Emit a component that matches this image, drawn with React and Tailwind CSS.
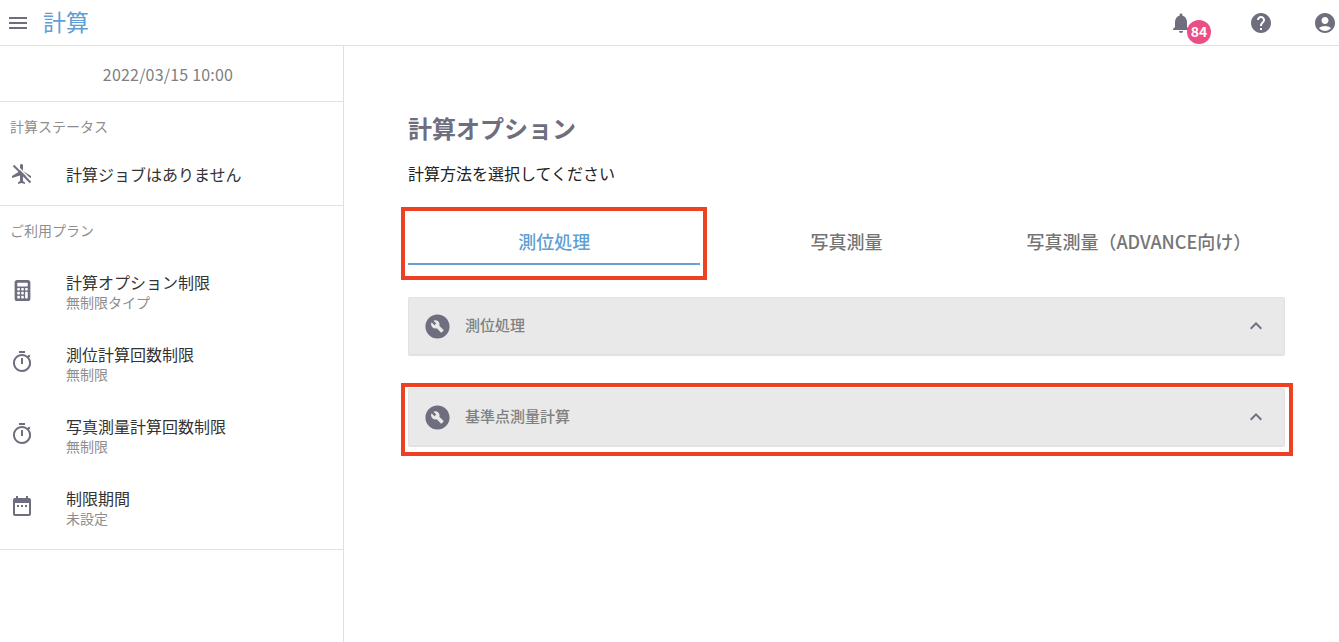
import React from "react";
import { MdMenu, MdOutlineTimer, MdDateRange, MdBuildCircle, MdNotifications, MdHelp, MdAccountCircle, MdExpandLess } from "react-icons/md";
import { BsCalculatorFill } from "react-icons/bs";

const font = { fontFamily: '"Noto Sans CJK JP", "Noto Sans", sans-serif' };

function PlaneOff() {
  return (
    <svg viewBox="0 0 24 24" className="h-[24px] w-[24px]" fill="currentColor">
      <path d="M21 16v-2l-8-5V3.5c0-.83-.67-1.5-1.5-1.5S10 2.67 10 3.5V9l-8 5v2l8-2.5V19l-2 1.5V22l3.5-1 3.5 1v-1.5L13 19v-5.5l8 2.5z" />
      <path d="M5.5 2.5L22.5 19.5" stroke="#ffffff" strokeWidth="1.6" fill="none" />
      <path d="M3.5 3.5L20.5 20.5" stroke="currentColor" strokeWidth="2" fill="none" />
    </svg>
  );
}

function PlanRow({ icon, title, sub }) {
  return (
    <div className="flex h-[72px] items-center pl-[10px]">
      <div className="mb-[4px] flex w-[56px] shrink-0 items-center text-[#6e6e7e]">{icon}</div>
      <div className="flex flex-col">
        <span className="text-[16px] leading-[20px] text-[#333333]">{title}</span>
        <span className="text-[14px] leading-[20px] text-[#8e8e8e]">{sub}</span>
      </div>
    </div>
  );
}

function Accordion({ title }) {
  return (
    <div className="flex h-[59px] items-center justify-between rounded-[2px] border border-b-2 border-[#e2e2e2] bg-[#e9e9e9] pl-[14px] pr-[16px]">
      <div className="flex items-center gap-[13px]">
        <MdBuildCircle className="h-[29px] w-[29px] text-[#6e6e7e]" />
        <span className="mb-[2px] text-[15px] font-medium text-[#808080]">{title}</span>
      </div>
      <MdExpandLess className="h-[24px] w-[24px] text-[#6e6e7e]" />
    </div>
  );
}

export default function App() {
  return (
    <div className="relative flex h-[642px] w-[1339px] flex-col overflow-hidden bg-white" style={font}>
      <header className="flex h-[46px] shrink-0 items-center justify-between border-b border-[#e0e0e0] pl-[6px] pr-[2px]">
        <div className="flex items-center">
          <MdMenu className="h-[24px] w-[24px] text-[#6e6e7e]" />
          <span className="mb-[4px] ml-[13px] text-[23px] leading-[30px] text-[#5f9fd3]">計算</span>
        </div>
        <div className="flex items-center">
          <div className="relative mr-[56px]">
            <MdNotifications className="h-[24px] w-[24px] text-[#6e6e7e]" />
            <span className="absolute left-[18px] top-[9px] flex h-[24px] w-[24px] items-center justify-center rounded-full bg-[#ec4d85] text-[14px] font-bold text-white">84</span>
          </div>
          <MdHelp className="mr-[40px] h-[24px] w-[24px] text-[#6e6e7e]" />
          <MdAccountCircle className="h-[24px] w-[24px] text-[#6e6e7e]" />
        </div>
      </header>
      <div className="flex min-h-0 flex-1">
        <aside className="w-[344px] shrink-0 border-r border-[#e0e0e0]">
          <div className="flex h-[56px] items-center justify-center border-b border-[#e0e0e0] pr-[7px] text-[16px] tracking-[0.2px] text-[#808080]">2022/03/15 10:00</div>
          <div className="h-[104px] border-b border-[#e0e0e0]">
            <div className="pl-[10px] pt-[14px] text-[14px] leading-[20px] text-[#8e8e8e]">計算ステータス</div>
            <div className="mt-[14px] flex h-[48px] items-center pl-[10px]">
              <div className="w-[56px] shrink-0 text-[#6e6e7e]"><PlaneOff /></div>
              <span className="text-[16px] text-[#333333]">計算ジョブはありません</span>
            </div>
          </div>
          <div className="h-[344px] border-b border-[#e0e0e0]">
            <div className="pl-[10px] pt-[14px] pb-[16px] text-[14px] leading-[20px] text-[#8e8e8e]">ご利用プラン</div>
            <PlanRow icon={<BsCalculatorFill className="ml-[2px] h-[21px] w-[21px]" />} title="計算オプション制限" sub="無制限タイプ" />
            <PlanRow icon={<MdOutlineTimer className="h-[24px] w-[24px]" />} title="測位計算回数制限" sub="無制限" />
            <PlanRow icon={<MdOutlineTimer className="h-[24px] w-[24px]" />} title="写真測量計算回数制限" sub="無制限" />
            <PlanRow icon={<MdDateRange className="h-[24px] w-[24px]" />} title="制限期間" sub="未設定" />
          </div>
        </aside>
        <main className="flex-1 pl-[64px] pr-[54px]">
          <h1 className="mt-[64px] text-[24px] font-bold leading-[36px] text-[#6e6e7e]">計算オプション</h1>
          <p className="mt-[15px] text-[16px] leading-[24px] text-[#222222]">計算方法を選択してください</p>
          <div className="mt-[31px] grid h-[49px] grid-cols-3">
            <div className="flex items-center justify-center border-b-2 border-[#6a9fd3] pt-[4px] text-[18px] font-medium text-[#5f9fd3]">測位処理</div>
            <div className="flex items-center justify-center pt-[2px] text-[18px] font-medium text-[#757575]">写真測量</div>
            <div className="flex items-center justify-center pt-[2px] text-[18px] font-medium text-[#757575]">写真測量（ADVANCE向け）</div>
          </div>
          <div className="mt-[32px] flex flex-col gap-[32px]">
            <Accordion title="測位処理" />
            <Accordion title="基準点測量計算" />
          </div>
        </main>
      </div>
      <div className="absolute left-[401px] top-[207px] h-[73px] w-[306px] border-4 border-[#ee4124]" />
      <div className="absolute left-[401px] top-[383px] h-[73px] w-[892px] border-4 border-[#ee4124]" />
    </div>
  );
}
